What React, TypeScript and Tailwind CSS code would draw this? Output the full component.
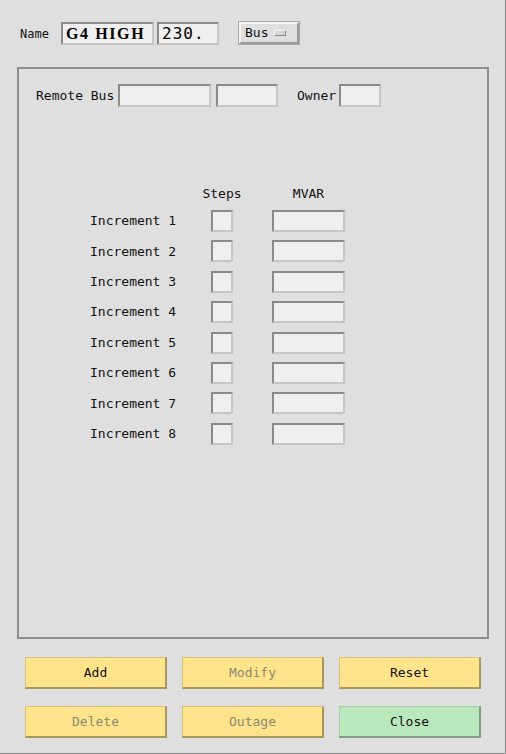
const mono = { fontFamily: '"DejaVu Sans Mono", "Liberation Mono", monospace' };

function Field({ w, children, bold }: { w: string; children?: React.ReactNode; bold?: boolean }) {
    return (
        <div
            className={`${w} h-[23px] bg-[#efefef] border-2 border-t-[#8a8a8a] border-l-[#8a8a8a] border-b-[#c6c6c6] border-r-[#c6c6c6] flex items-center px-[3px] overflow-hidden`}
        >
            {children && (
                <span
                    className={`leading-none text-black ${bold ? 'font-bold text-[16px] tracking-[1.6px]' : 'text-[16px] tracking-[1px]'}`}
                    style={{ fontFamily: bold ? '"Liberation Serif", "DejaVu Serif", serif' : '"DejaVu Sans Mono", monospace' }}
                >
                    {children}
                </span>
            )}
        </div>
    );
}

function ActionButton({ label, disabled, green }: { label: string; disabled?: boolean; green?: boolean }) {
    const colors = green
        ? 'bg-[#b9e8bd] border-t-[#a6cfaa] border-l-[#a6cfaa] border-b-[#7f9f83] border-r-[#7f9f83]'
        : 'bg-[#ffe48c] border-t-[#d6c27a] border-l-[#d6c27a] border-b-[#a8975a] border-r-[#a8975a]';
    return (
        <button
            type="button"
            className={`w-[142px] h-[32px] border-t border-l border-b-2 border-r-2 ${colors} flex items-center justify-center text-[13px] ${disabled ? 'text-[#8e8872]' : 'text-[#111]'}`}
            style={mono}
        >
            {label}
        </button>
    );
}

export default function App() {
    const rows = [1, 2, 3, 4, 5, 6, 7, 8];

    return (
        <div
            className="w-[506px] h-[754px] bg-[#dfdfdf] border-r border-b border-[#8a8a8a] flex flex-col text-[13px] text-[#111]"
            style={mono}
        >
            {/* Name row */}
            <div className="flex items-center pl-[20px] pt-[22px]">
                <span className="w-[41px] text-[12px]">Name</span>
                <Field w="w-[93px]" bold>G4 HIGH</Field>
                <div className="w-[3px]" />
                <Field w="w-[62px]">230.</Field>
                <div className="ml-[20px] -mt-[2px] w-[60px] h-[22px] border-2 border-t-[#f4f4f4] border-l-[#f4f4f4] border-b-[#9a9a9a] border-r-[#9a9a9a] outline outline-1 outline-[#a8a8a8] flex items-center pl-[4px] gap-[6px]">
                    <span>Bus</span>
                    <span className="w-[12px] h-[6px] bg-[#d4d4d4] border border-t-[#f6f6f6] border-l-[#f6f6f6] border-b-[#8a8a8a] border-r-[#8a8a8a]" />
                </div>
            </div>

            {/* Frame */}
            <div className="ml-[17px] mt-[22px] w-[472px] h-[572px] border-2 border-[#8e8e8e] flex flex-col">
                <div className="flex items-center pl-[17px] pt-[15px]">
                    <span className="w-[82px]">Remote Bus</span>
                    <Field w="w-[93px]" />
                    <div className="w-[5px]" />
                    <Field w="w-[62px]" />
                    <span className="ml-[19px] w-[42px]">Owner</span>
                    <Field w="w-[42px]" />
                </div>

                <div className="flex pl-[71px] mt-[79px] h-[16px] items-center">
                    <span className="w-[121px]" />
                    <span className="w-[22px] flex justify-center">Steps</span>
                    <span className="ml-[39px] w-[73px] flex justify-center">MVAR</span>
                </div>

                <div className="flex flex-col gap-[8.4px] mt-[8px] pl-[71px]">
                    {rows.map((n) => (
                        <div key={n} className="flex items-center h-[22px]">
                            <span className="w-[121px]">Increment {n}</span>
                            <div className="w-[22px] h-[22px] bg-[#efefef] border-2 border-t-[#8a8a8a] border-l-[#8a8a8a] border-b-[#c6c6c6] border-r-[#c6c6c6]" />
                            <div className="ml-[39px] w-[73px] h-[22px] bg-[#efefef] border-2 border-t-[#8a8a8a] border-l-[#8a8a8a] border-b-[#c6c6c6] border-r-[#c6c6c6]" />
                        </div>
                    ))}
                </div>
            </div>

            {/* Buttons */}
            <div className="grid grid-cols-[142px_142px_142px] gap-x-[15px] gap-y-[17px] pl-[25px] mt-[18px]">
                <ActionButton label="Add" />
                <ActionButton label="Modify" disabled />
                <ActionButton label="Reset" />
                <ActionButton label="Delete" disabled />
                <ActionButton label="Outage" disabled />
                <ActionButton label="Close" green />
            </div>
        </div>
    );
}
